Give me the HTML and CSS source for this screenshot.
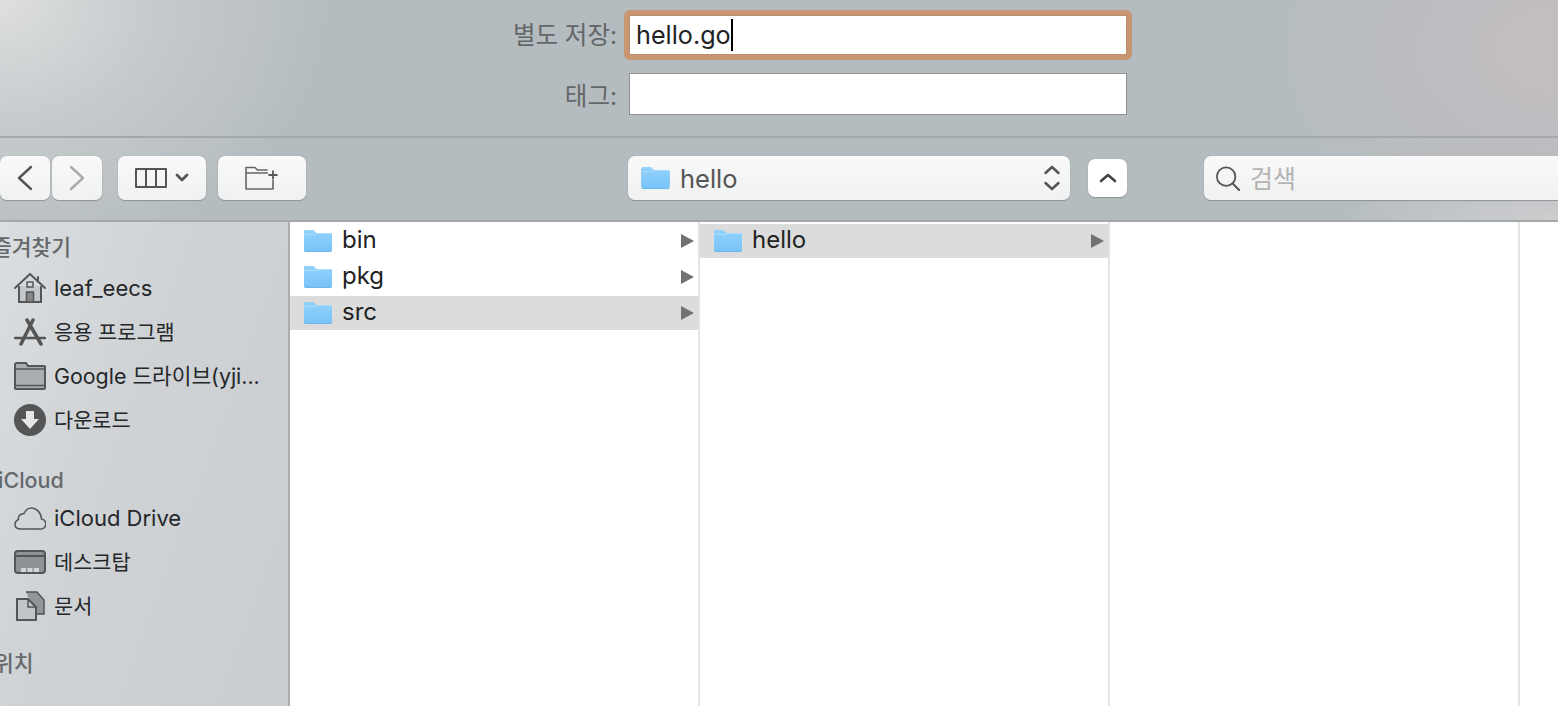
FILE: index.html
```html
<!DOCTYPE html>
<html lang="ko">
  <head>
    <title>별도 저장</title>
    <link rel="stylesheet" href="styles.css">
  </head>
  <body>
    <svg class="defs" width="0" height="0">
      <defs>
        <linearGradient id="folder-fill" x1="0" y1="0" x2="0" y2="1">
          <stop offset="0" stop-color="#93d2fb" />
          <stop offset="1" stop-color="#77c3f8" />
        </linearGradient>
        <symbol id="folder" viewBox="0 0 30 24">
          <path d="M1 3a2 2 0 0 1 2-2h7l3 3h14a2 2 0 0 1 2 2v15a2 2 0 0 1-2 2H3a2 2 0 0 1-2-2z" fill="#5fa9dc" />
          <path d="M1 3a2 2 0 0 1 2-2h7l3 3h14a2 2 0 0 1 2 2v14.500a2 2 0 0 1-2 2H3a2 2 0 0 1-2-2z" fill="url(#folder-fill)" />
          <path d="M1 5.500h12.500l1-1H29" fill="none" stroke="#a9dcfd" stroke-width="1" />
        </symbol>
      </defs>
    </svg>

    <header class="save-head">
      <div class="save-grid">
        <label class="save-label first" for="file-name">별도 저장:</label>
        <div class="name-ring">
          <div class="name-box" id="file-name">hello.go<span class="caret"></span></div>
        </div>
        <label class="save-label" for="tags">태그:</label>
        <div class="tag-box" id="tags"></div>
      </div>
    </header>

    <div class="toolbar">
      <div class="nav-pair">
        <button class="btn btn-nav">
          <svg width="18" height="26" viewBox="0 0 18 26"><path d="M15 2 3 13l12 11" fill="none" stroke="#555" stroke-width="2.400" stroke-linecap="round" stroke-linejoin="round" /></svg>
        </button>
        <button class="btn btn-nav">
          <svg width="18" height="26" viewBox="0 0 18 26"><path d="m3 2 12 11L3 24" fill="none" stroke="#aaa" stroke-width="2.400" stroke-linecap="round" stroke-linejoin="round" /></svg>
        </button>
      </div>
      <button class="btn btn-view">
        <svg width="32" height="20" viewBox="0 0 32 20"><path d="M1 1h30v18H1zM11 1v18M21 1v18" fill="none" stroke="#555" stroke-width="2" stroke-linejoin="round" /></svg>
        <svg width="14" height="10" viewBox="0 0 14 10"><path d="m2 2 5 5 5-5" fill="none" stroke="#555" stroke-width="2.800" stroke-linecap="round" stroke-linejoin="round" /></svg>
      </button>
      <button class="btn btn-new">
        <svg width="36" height="24" viewBox="0 0 36 24"><path d="M29 14v9H2V1.500h9l2.500 2.500h10M2 7h22" fill="none" stroke="#666" stroke-width="1.600" stroke-linejoin="round" /><path d="M29 4.500v9M24.500 9h9" fill="none" stroke="#555" stroke-width="1.800" /></svg>
      </button>
      <button class="btn btn-path">
        <svg class="path-folder" width="31" height="24"><use href="#folder" /></svg>
        <span class="path-name">hello</span>
        <svg class="path-arrows" width="18" height="28" viewBox="0 0 18 28"><path d="m2.500 9 6.500-6 6.500 6M2.500 19 9 25l6.500-6" fill="none" stroke="#555" stroke-width="2.500" stroke-linecap="round" stroke-linejoin="round" /></svg>
      </button>
      <button class="btn btn-up">
        <svg width="18" height="12" viewBox="0 0 18 12"><path d="m2 9 7-6 7 6" fill="none" stroke="#444" stroke-width="2.600" stroke-linecap="round" stroke-linejoin="round" /></svg>
      </button>
      <div class="search">
        <svg width="26" height="25" viewBox="0 0 28 27"><circle cx="12" cy="11.500" r="10" fill="none" stroke="#555" stroke-width="1.900" /><path d="m19 19 7 7" stroke="#555" stroke-width="2.200" stroke-linecap="round" /></svg>
        <span class="search-hint">검색</span>
      </div>
    </div>

    <main class="browser">
      <aside class="sidebar">
        <h2 class="side-title title-fav">즐겨찾기</h2>
        <a class="side-item">
          <svg class="side-icon" width="32" height="30" viewBox="0 0 32 30"><path d="M5 13v16h22V13" fill="#c3c7ca" stroke="#555" stroke-width="2" /><path d="M1 15 16 1l15 14M24 4v5" fill="none" stroke="#555" stroke-width="2" stroke-linecap="round" /><path d="M12.500 19h7v10h-7z" fill="#888" stroke="#555" stroke-width="1.500" /><path d="M13 9h6v5h-6z" fill="none" stroke="#555" stroke-width="1.500" /></svg>
          leaf_eecs
        </a>
        <a class="side-item">
          <svg class="side-icon" width="32" height="28" viewBox="0 0 32 28"><path d="M13 2 27 26M19 2 7 26" stroke="#555" stroke-width="3.500" stroke-linecap="round" /><path d="M1 20h30" stroke="#555" stroke-width="2.500" stroke-linecap="round" /></svg>
          <span class="ko">응용 프로그램</span>
        </a>
        <a class="side-item">
          <svg class="side-icon" width="32" height="28" viewBox="0 0 32 28"><path d="M1 3a2 2 0 0 1 1-2h10l2 3h16a1 1 0 0 1 1 1v21a1 1 0 0 1-1 1H2a1 1 0 0 1-1-1z" fill="#a9adb1" stroke="#555" stroke-width="2" /><path d="M1 7h30M1 23.500h30" stroke="#555" stroke-width="1.500" /></svg>
          <span class="ko mixed">Google 드라이브(yji...</span>
        </a>
        <a class="side-item">
          <svg class="side-icon" width="32" height="32" viewBox="0 0 32 32"><circle cx="16" cy="16" r="16" fill="#555" /><path d="M12 7h8v8h5L16 25 7 15h5z" fill="#e4e6e8" /></svg>
          <span class="ko">다운로드</span>
        </a>
        <h2 class="side-title title-cloud">iCloud</h2>
        <a class="side-item">
          <svg class="side-icon" width="32" height="23" viewBox="0 0 32 23"><path d="M7 22h19a5 5 0 0 0 1.500-10C27 5 22 1 17.500 1 14 1 11.500 3 10 6.500 5 7 4 10 4.500 12.500 2 13.500 1 15.500 1 17.500 1 20.500 3.500 22 7 22z" fill="none" stroke="#555" stroke-width="1.500" /></svg>
          iCloud Drive
        </a>
        <a class="side-item">
          <svg class="side-icon" width="32" height="24" viewBox="0 0 32 24"><rect x="1" y="1" width="30" height="22" rx="3" fill="#8f9396" stroke="#555" stroke-width="2" /><path d="M1 6h30" stroke="#555" stroke-width="2" /><path d="M7 18h5v4H7zM13.500 18h5v4h-5zM20 18h5v4h-5z" fill="#d2d4d6" /></svg>
          <span class="ko">데스크탑</span>
        </a>
        <a class="side-item">
          <svg class="side-icon" width="32" height="30" viewBox="0 0 32 30"><path d="M12 1h11l7 8v14h-8" fill="#92969a" stroke="#555" stroke-width="1.500" /><path d="M3 8h11l8 8v13H3z" fill="#c2c5c8" stroke="#555" stroke-width="2" /><path d="M14 8v8h8" fill="none" stroke="#555" stroke-width="1.500" /></svg>
          <span class="ko">문서</span>
        </a>
        <h2 class="side-title title-place">위치</h2>
      </aside>

      <section class="column">
        <div class="row">
          <svg class="row-folder" width="30" height="24"><use href="#folder" /></svg>
          <span class="row-name">bin</span>
          <i class="row-arrow"></i>
        </div>
        <div class="row">
          <svg class="row-folder" width="30" height="24"><use href="#folder" /></svg>
          <span class="row-name">pkg</span>
          <i class="row-arrow"></i>
        </div>
        <div class="row selected">
          <svg class="row-folder" width="30" height="24"><use href="#folder" /></svg>
          <span class="row-name">src</span>
          <i class="row-arrow"></i>
        </div>
      </section>
      <section class="column">
        <div class="row selected">
          <svg class="row-folder" width="30" height="24"><use href="#folder" /></svg>
          <span class="row-name">hello</span>
          <i class="row-arrow"></i>
        </div>
      </section>
      <section class="column"></section>
      <section class="column last"></section>
    </main>
  </body>
</html>
```

FILE: styles.css
```css
* {
  box-sizing: border-box;
}
html,
body {
  height: 100%;
}
body {
  margin: 0;
  height: 706px;
  overflow: hidden;
  display: flex;
  flex-direction: column;
  font-family: Inter, "Noto Sans CJK KR", "Noto Sans", sans-serif;
  font-size: 24px;
  color: #222;
  background:
    radial-gradient(ellipse 330px 270px at 0 0, #dedfdf 0, #c6cbcd 45%, rgba(181, 188, 191, 0) 100%),
    radial-gradient(ellipse 280px 200px at 100% 50px, #c4bdc1 0, rgba(181, 188, 191, 0) 100%),
    radial-gradient(ellipse 220px 70px at 100% 222px, #d0d1d3 0, rgba(181, 188, 191, 0) 100%),
    #b5bcbf;
}
.defs {
  position: absolute;
}

/* top part */
.save-head {
  height: 138px;
  border-bottom: 2px solid #a3a8ab;
  padding-top: 15px;
}
.save-grid {
  display: grid;
  grid-template-columns: 617px 498px;
  column-gap: 12px;
  row-gap: 18px;
  align-items: center;
}
.save-label {
  text-align: right;
  color: #646769;
  font-size: 24.500px;
}
.save-label.first {
  padding-bottom: 4px;
}
.name-ring {
  height: 40px;
  background: #fff;
  border: 1px solid #b98f6e;
  box-shadow: 0 0 0 5px #c99673;
  border-radius: 2px;
}
.name-box {
  height: 38px;
  padding-left: 6px;
  line-height: 38px;
  font-size: 25.200px;
  display: flex;
  align-items: center;
  color: #222;
}
.caret {
  display: inline-block;
  width: 2px;
  height: 32px;
  background: #000;
}
.tag-box {
  height: 42px;
  background: #fff;
  border: 1px solid #8b9195;
}

/* toolbar */
.toolbar {
  height: 84px;
  border-bottom: 2px solid #a3a8ab;
  padding-top: 18px;
  padding-bottom: 20px;
  display: flex;
  align-items: center;
}
.btn {
  height: 44px;
  padding: 0;
  border: 0;
  border-radius: 7px;
  background: linear-gradient(#f9f9f9, #f0f1f1);
  box-shadow: 0 0 1px #8f9497, 0 1px 1px #8f9497;
  display: flex;
  align-items: center;
  justify-content: center;
  flex-shrink: 0;
  font: inherit;
}
.nav-pair {
  display: flex;
  gap: 2px;
  flex-shrink: 0;
}
.btn-nav {
  width: 50px;
}
.btn-view {
  width: 88px;
  margin-left: 16px;
  gap: 8px;
}
.btn-new {
  width: 88px;
  margin-left: 12px;
}
.btn-path {
  width: 442px;
  margin-left: 322px;
  justify-content: flex-start;
  padding-left: 12px;
}
.path-name {
  margin-left: 9px;
  color: #555;
  font-size: 25.500px;
}
.path-arrows {
  margin-left: auto;
  margin-right: 9px;
}
.btn-up {
  width: 39px;
  height: 38px;
  margin-left: 18px;
  background: #fff;
}
.search {
  width: 360px;
  height: 44px;
  margin-left: 77px;
  padding-left: 11px;
  border-radius: 7px 0 0 7px;
  background: linear-gradient(#f9f9f9, #f0f1f1);
  box-shadow: 0 0 1px #8f9497, 0 1px 1px #8f9497;
  display: flex;
  align-items: center;
  gap: 9px;
  flex-shrink: 0;
}
.search-hint {
  color: #b3b3b3;
  font-size: 25px;
  padding-bottom: 2px;
}

/* browser area */
.browser {
  flex: 1;
  display: flex;
  min-height: 0;
}
.sidebar {
  width: 290px;
  flex-shrink: 0;
  border-right: 2px solid #a9adb0;
  background: linear-gradient(110deg, #dadee1 0, #cfd3d6 40%, #c9cdd0 100%);
  overflow: hidden;
}
.side-title {
  margin: 0;
  font-size: 21.500px;
  font-weight: 500;
  line-height: 30px;
  color: #66696c;
}
.title-fav {
  margin-left: -8px;
  margin-top: 10px;
  margin-bottom: 4px;
}
.title-cloud {
  margin-left: -2px;
  margin-top: 23px;
  margin-bottom: 1px;
}
.title-place {
  margin-left: -6px;
  margin-top: 20px;
}
.side-item {
  height: 44px;
  display: flex;
  align-items: center;
  padding-left: 14px;
  font-size: 22px;
  color: #25272a;
  white-space: nowrap;
}
.side-item .ko {
  font-size: 20.800px;
  padding-bottom: 3px;
}
.side-item .mixed {
  font-size: 21.400px;
}
.side-icon {
  margin-right: 8px;
  flex-shrink: 0;
}
.column {
  width: 410px;
  flex-shrink: 0;
  background: #fff;
  border-right: 2px solid #e4e4e4;
  padding-top: 2px;
  display: flex;
  flex-direction: column;
  gap: 2px;
}
.column.last {
  width: auto;
  flex: 1;
  border-right: 0;
}
.row {
  height: 34px;
  display: flex;
  align-items: center;
  padding-left: 13px;
  padding-right: 4px;
}
.row.selected {
  background: #dcdcdc;
}
.row-folder {
  flex-shrink: 0;
}
.row-name {
  margin-left: 9px;
  padding-bottom: 3px;
  color: #222;
}
.row-arrow {
  margin-left: auto;
  width: 0;
  height: 0;
  border-left: 13px solid #727272;
  border-top: 7px solid transparent;
  border-bottom: 7px solid transparent;
}
```
